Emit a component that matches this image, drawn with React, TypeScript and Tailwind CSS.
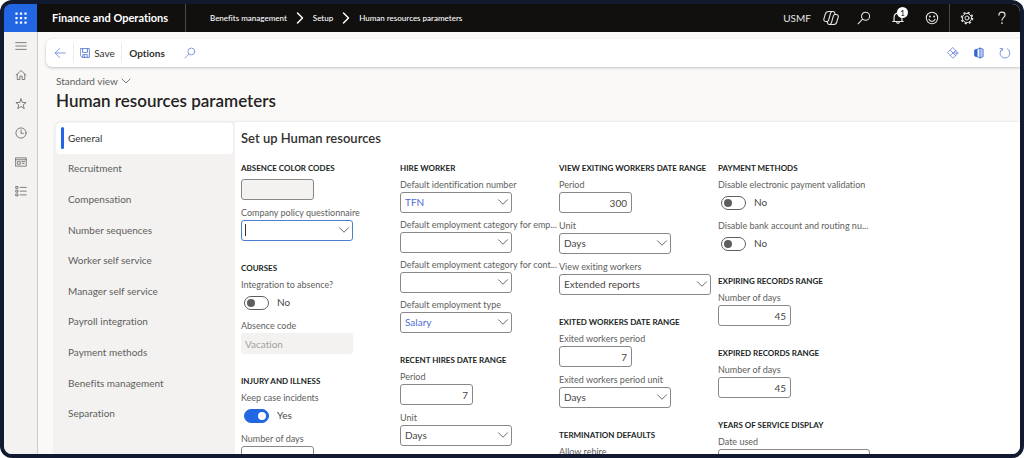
import type { ReactNode } from 'react'
import { ChevronDown, ChevronRight } from 'lucide-react'

const navItems = [
  'General',
  'Recruitment',
  'Compensation',
  'Number sequences',
  'Worker self service',
  'Manager self service',
  'Payroll integration',
  'Payment methods',
  'Benefits management',
  'Separation',
]

function Icon({ children, className = '' }: { children: ReactNode; className?: string }) {
  return (
    <svg
      viewBox="0 0 16 16"
      fill="none"
      stroke="currentColor"
      strokeLinecap="round"
      strokeLinejoin="round"
      className={`shrink-0 ${className}`}
      aria-hidden="true"
    >
      {children}
    </svg>
  )
}

function WaffleIcon() {
  return (
    <Icon className="size-3">
      <g fill="currentColor" stroke="none">
        {[0.5, 6.5, 12.5].map((y) =>
          [0.5, 6.5, 12.5].map((x) => <rect key={`${x}-${y}`} x={x} y={y} width="3" height="3" rx="0.6" />),
        )}
      </g>
    </Icon>
  )
}

function SearchIcon({ className }: { className: string }) {
  return (
    <Icon className={className}>
      <circle cx="9.8" cy="6" r="4.6" strokeWidth="1.2" />
      <path d="M6.4 9.4 1.2 14.6" strokeWidth="1.2" />
    </Icon>
  )
}

function CopilotIcon() {
  return (
    <Icon className="size-4">
      <path d="M5.8 1.5h4.2c.9 0 1.500.5 1.700 1.300l.4 1.700h1.100c1.500 0 2.400 1.200 2 2.600l-1.300 4.600c-.4 1.700-1.400 2.800-2.900 2.800H6.300c-.9 0-1.500-.5-1.700-1.300l-.4-1.700H2.900c-1.500 0-2.400-1.200-2-2.600l1.300-4.600C2.700 2.600 3.900 1.500 5.800 1.500z" strokeWidth="1.1" />
      <path d="M9.300 1.500c-1 .2-1.500.9-1.800 1.900L5.700 9.800c-.3 1-.7 1.600-1.500 1.700M6.700 14.500c1-.2 1.500-.9 1.800-1.900l1.800-6.400c.3-1 .7-1.600 1.800-1.700" strokeWidth="1.1" />
    </Icon>
  )
}

function BellIcon() {
  return (
    <Icon className="size-3.5">
      <path d="M2 12h12M3.500 12V7c0-2.600 2-4.500 4.500-4.500s4.500 1.900 4.500 4.500v5M6.300 12.300c.2 1.200.8 1.800 1.700 1.800s1.500-.6 1.700-1.800" strokeWidth="1.400" />
    </Icon>
  )
}

function SmileIcon() {
  return (
    <Icon className="size-3.5">
      <circle cx="8" cy="8" r="6.500" strokeWidth="1.200" />
      <path d="M4.500 9.500c.7 1.600 2 2.400 3.500 2.400s2.800-.8 3.500-2.400" strokeWidth="1.200" />
      <circle cx="5.600" cy="6.200" r="1.100" fill="currentColor" stroke="none" />
      <circle cx="10.400" cy="6.200" r="1.100" fill="currentColor" stroke="none" />
    </Icon>
  )
}

function GearIcon() {
  return (
    <Icon className="size-3.5">
      <circle cx="8" cy="8" r="5.200" strokeWidth="1.100" />
      <circle cx="8" cy="8" r="2.300" strokeWidth="1.100" />
      <circle cx="8" cy="8" r="6.300" strokeWidth="1.800" strokeDasharray="2.470 2.470" strokeLinecap="butt" />
    </Icon>
  )
}

function HelpIcon() {
  return (
    <Icon className="size-3.5">
      <path d="M4.500 4.800C4.500 2.700 6 1.300 8 1.300s3.500 1.300 3.500 3.200c0 2.600-3.500 3-3.500 6" strokeWidth="1.300" />
      <circle cx="8" cy="13.800" r="1" fill="currentColor" stroke="none" />
    </Icon>
  )
}

function HeaderButton({ label, className = 'w-[34px]', children }: { label: string; className?: string; children: ReactNode }) {
  return (
    <button type="button" aria-label={label} className={`flex h-full items-center justify-center ${className}`}>
      {children}
    </button>
  )
}

function Header() {
  return (
    <header className="flex h-7 shrink-0 items-center bg-[#11100f] text-white">
      <button type="button" aria-label="App launcher" className="flex h-full w-[33px] items-center justify-center bg-[#2266e3]">
        <WaffleIcon />
      </button>
      <div className="flex h-full w-[149px] items-center border-r border-[#4a4948] pl-[15px] text-[11px] font-bold whitespace-nowrap">
        Finance and Operations
      </div>
      <nav aria-label="Breadcrumb" className="flex items-center gap-[3px] pl-6 text-[8px] font-medium whitespace-nowrap">
        <a href="#benefits">Benefits management</a>
        <ChevronRight className="size-5" strokeWidth={1.75} />
        <a href="#setup">Setup</a>
        <ChevronRight className="size-5" strokeWidth={1.75} />
        <a href="#parameters">Human resources parameters</a>
      </nav>
      <div className="ml-auto flex h-full items-center text-[#e6e6e6]">
        <button type="button" className="pr-3 text-[10px]">USMF</button>
        <HeaderButton label="Copilot" className="w-4">
          <CopilotIcon />
        </HeaderButton>
        <HeaderButton label="Search" className="ml-2 w-[34px]">
          <SearchIcon className="size-3.5" />
        </HeaderButton>
        <HeaderButton label="Notifications">
          <span className="relative">
            <BellIcon />
            <span className="absolute -top-1 left-1.5 flex size-[11px] items-center justify-center rounded-full bg-white text-[8px] text-black">
              1
            </span>
          </span>
        </HeaderButton>
        <HeaderButton label="Feedback">
          <SmileIcon />
        </HeaderButton>
        <HeaderButton label="Settings" className="w-[35px] border-l border-[#4a4948]">
          <GearIcon />
        </HeaderButton>
        <HeaderButton label="Help" className="w-9">
          <HelpIcon />
        </HeaderButton>
      </div>
    </header>
  )
}

function SideRail() {
  const items = [
    {
      label: 'Menu',
      icon: <path d="M1 3.500h14M1 8h14M1 12.500h14" />,
    },
    {
      label: 'Home',
      icon: <path d="M1.500 8.200 8 2l6.500 6.200M3 7v7h3.500V9.500h3V14H13V7" />,
    },
    {
      label: 'Favorites',
      icon: <path d="m8 1.200 1.800 4.700 5 .2-3.900 3.100 1.400 4.900L8 11.300l-4.300 2.800 1.400-4.900L1.200 6.100l5-.2z" />,
    },
    {
      label: 'Recent',
      icon: (
        <>
          <circle cx="8" cy="8" r="6.800" />
          <path d="M8 4v4.500h3" />
        </>
      ),
    },
    {
      label: 'Workspaces',
      icon: <path d="M1 2.500h14v11H1zM1 5h14M3.500 7.500h3.500v3.500H3.500zM9 7.500h4M10 10h2" />,
    },
    {
      label: 'Modules',
      icon: <path d="M1.500 2h2.500v2.500H1.500zM1.500 7h2.500v2.500H1.500zM1.500 12h2.500v2.500H1.500zM7 3.200h8M7 8.200h8M7 13.200h8" />,
    },
  ]

  return (
    <nav aria-label="Main" className="w-[34px] shrink-0 border-r border-[#cfcdcb] bg-[#f3f2f1] text-[#5c5a58]">
      <ul className="grid h-[173px] auto-rows-fr">
        {items.map((item) => (
          <li key={item.label} className="flex">
            <button type="button" aria-label={item.label} className="flex flex-1 items-center justify-center">
              <Icon className="size-3">{item.icon}</Icon>
            </button>
          </li>
        ))}
      </ul>
    </nav>
  )
}

function Toolbar() {
  return (
    <div className="mt-[7px] ml-2 flex h-7 shrink-0 items-center rounded-l-md bg-white pr-0.5 text-[10px] text-[#323130] shadow-[0_1px_3px_rgba(0,0,0,0.22)]">
      <button type="button" aria-label="Back" className="flex h-5 w-7 items-center justify-center border-r border-[#edebe9] text-[#7b93dc]">
        <Icon className="size-3">
          <path d="M15 8H1.500M7.500 2 1.500 8l6 6" strokeWidth="1.300" />
        </Icon>
      </button>
      <button type="button" className="flex h-5 w-12 items-center justify-center gap-1 border-r border-[#edebe9]">
        <Icon className="size-2.5 text-[#5f7fd9]">
          <path d="M1 1h14v14H3.500L1 12.500zM4 1v6h8V1M4.500 15v-4.500h7V15M7 12.500V15" strokeWidth="1.500" />
        </Icon>
        Save
      </button>
      <button type="button" className="w-[50px] text-center font-bold">Options</button>
      <button type="button" aria-label="Search actions" className="flex h-5 w-9 items-center justify-center text-[#7b93dc]">
        <SearchIcon className="size-3" />
      </button>
      <div className="ml-auto flex items-center text-[#6f8bdd]">
        <button type="button" aria-label="Power Apps" className="flex w-[26px] justify-center">
          <Icon className="size-3">
            <path d="M8 1 15 8 8 15 1 8z" strokeWidth="1.200" />
            <path d="M4.500 4.500 8 8l-3.500 3.500M11.500 4.500 8 8l3.500 3.500M11.500 6.500 13 8l-1.500 1.500L10 8z" strokeWidth="1.200" />
          </Icon>
        </button>
        <button type="button" aria-label="Open in Microsoft Office" className="flex w-[26px] justify-center">
          <Icon className="size-3 text-[#3267d0]">
            <path d="M9.500 1.500 3 4v8l6.500 2.500z" fill="#ffffff" />
            <path d="M9.500 1.500 13.500 3v10l-4 1.500z" fill="#b9c9f5" />
            <path d="M2.500 4 5.500 3v10l-3-1z" fill="currentColor" />
          </Icon>
        </button>
        <button type="button" aria-label="Refresh" className="flex w-[26px] justify-center">
          <Icon className="size-3">
            <path d="M11.200 2.300a6.600 6.600 0 1 1-6.900.3M1.500 1.800l3.200.4-.6 3.200" strokeWidth="1.200" />
          </Icon>
        </button>
      </div>
    </div>
  )
}

function Group({ title, gap = 'gap-[7px]', children }: { title: string; gap?: string; children: ReactNode }) {
  return (
    <section>
      <h3 className="mb-1 h-3.5 text-[8px] leading-[14px] font-bold whitespace-nowrap text-[#201f1e]">{title}</h3>
      <div className={`flex flex-col ${gap}`}>{children}</div>
    </section>
  )
}

function Label({ id, children }: { id: string; children: ReactNode }) {
  return (
    <label htmlFor={id} className="block h-[13px] text-[9px] leading-3 whitespace-nowrap text-[#605e5c]">
      {children}
    </label>
  )
}

function NumberField({ id, label, value }: { id: string; label: string; value: string }) {
  return (
    <div>
      <Label id={id}>{label}</Label>
      <input
        id={id}
        defaultValue={value}
        className="block h-[21px] w-[73px] rounded-[3px] border border-[#8a8886] bg-white px-1 text-right text-[10px] text-[#484644]"
      />
    </div>
  )
}

type SelectFieldProps = {
  id: string
  label: string
  value?: string
  wide?: boolean
  lookup?: boolean
  focused?: boolean
}

function SelectField({ id, label, value = '', wide, lookup, focused }: SelectFieldProps) {
  return (
    <div>
      <Label id={id}>{label}</Label>
      <div className={`relative ${wide ? 'w-[152px]' : 'w-28'}`}>
        <select
          id={id}
          defaultValue={value}
          className={`block h-[21px] w-full appearance-none rounded-[3px] border bg-white pl-1 text-[10px] ${
            focused ? 'border-[#4a7fd0]' : 'border-[#8a8886]'
          } ${lookup ? 'text-[#4f6bd8]' : 'text-[#484644]'}`}
        >
          <option>{value}</option>
        </select>
        {focused && <span className="absolute top-1 left-1 h-3 w-px bg-[#323130]" />}
        <ChevronDown className="pointer-events-none absolute top-px right-0 size-[18px] text-[#605e5c]" strokeWidth={1.25} />
      </div>
    </div>
  )
}

function ToggleField({ id, label, on = false }: { id: string; label: string; on?: boolean }) {
  return (
    <div>
      <Label id={id}>{label}</Label>
      <div className="flex h-[21px] items-center gap-2 pl-[3px] text-[10px] text-[#484644]">
        <input
          id={id}
          type="checkbox"
          role="switch"
          defaultChecked={on}
          className="h-3.5 w-[25px] appearance-none rounded-full border border-[#605e5c] bg-white p-0.5 before:block before:size-2 before:rounded-full before:bg-[#605e5c] checked:border-[#2266e3] checked:bg-[#2266e3] checked:before:ml-[11px] checked:before:bg-white"
        />
        {on ? 'Yes' : 'No'}
      </div>
    </div>
  )
}

function ParametersForm() {
  return (
    <form className="min-w-0 flex-1 overflow-hidden bg-white pl-1.5">
      <h2 className="pt-1.5 pb-[13px] text-[13px] leading-5 font-semibold text-[#323130]">Set up Human resources</h2>
      <div className="grid grid-cols-[repeat(4,151px)] gap-2">
        <div className="flex flex-col gap-5">
          <Group title="ABSENCE COLOR CODES">
            <input
              aria-label="Absence color"
              disabled
              className="block h-[21px] w-[73px] rounded-[3px] border border-[#8a8886] bg-[#f3f2f1]"
            />
            <SelectField id="questionnaire" label="Company policy questionnaire" focused />
          </Group>
          <Group title="COURSES">
            <ToggleField id="integration" label="Integration to absence?" />
            <div>
              <Label id="absence-code">Absence code</Label>
              <input
                id="absence-code"
                disabled
                defaultValue="Vacation"
                className="block h-[21px] w-28 rounded-[3px] bg-[#f3f2f1] px-1 text-[10px] text-[#a19f9d]"
              />
            </div>
          </Group>
          <Group title="INJURY AND ILLNESS">
            <ToggleField id="case-incidents" label="Keep case incidents" on />
            <NumberField id="injury-days" label="Number of days" value="5" />
          </Group>
        </div>

        <div className="flex flex-col gap-5">
          <Group title="HIRE WORKER" gap="gap-1.5">
            <SelectField id="identification" label="Default identification number" value="TFN" lookup />
            <SelectField id="category-employees" label="Default employment category for emp..." />
            <SelectField id="category-contractors" label="Default employment category for cont..." />
            <SelectField id="employment-type" label="Default employment type" value="Salary" lookup />
          </Group>
          <Group title="RECENT HIRES DATE RANGE">
            <NumberField id="hires-period" label="Period" value="7" />
            <SelectField id="hires-unit" label="Unit" value="Days" />
          </Group>
        </div>

        <div className="flex flex-col gap-5">
          <Group title="VIEW EXITING WORKERS DATE RANGE">
            <NumberField id="exiting-period" label="Period" value="300" />
            <SelectField id="exiting-unit" label="Unit" value="Days" />
            <SelectField id="exiting-view" label="View exiting workers" value="Extended reports" wide />
          </Group>
          <Group title="EXITED WORKERS DATE RANGE">
            <NumberField id="exited-period" label="Exited workers period" value="7" />
            <SelectField id="exited-unit" label="Exited workers period unit" value="Days" />
          </Group>
          <Group title="TERMINATION DEFAULTS">
            <ToggleField id="allow-rehire" label="Allow rehire" />
          </Group>
        </div>

        <div className="flex flex-col gap-5">
          <Group title="PAYMENT METHODS">
            <ToggleField id="electronic-payment" label="Disable electronic payment validation" />
            <ToggleField id="bank-account" label="Disable bank account and routing nu..." />
          </Group>
          <Group title="EXPIRING RECORDS RANGE">
            <NumberField id="expiring-days" label="Number of days" value="45" />
          </Group>
          <Group title="EXPIRED RECORDS RANGE">
            <NumberField id="expired-days" label="Number of days" value="45" />
          </Group>
          <Group title="YEARS OF SERVICE DISPLAY">
            <SelectField id="date-used" label="Date used" wide />
          </Group>
        </div>
      </div>
    </form>
  )
}

export default function App() {
  return (
    <div className="bg-white font-[Lato,'Open_Sans',sans-serif] [font-variant-ligatures:none]">
      <div className="flex h-screen flex-col rounded-xl bg-[#111a2e] p-1">
        <div className="flex min-h-0 flex-1 flex-col overflow-hidden rounded-lg bg-[#faf9f8]">
          <Header />
          <div className="flex min-h-0 flex-1">
            <SideRail />
            <main className="flex min-w-0 flex-1 flex-col">
              <Toolbar />
              <div className="flex min-h-0 flex-1 flex-col pt-1.5 pl-[17px]">
                <button type="button" className="ml-px flex h-4 items-center self-start text-[10px] text-[#605e5c]">
                  Standard view
                  <ChevronDown className="size-4" strokeWidth={1.25} />
                </button>
                <h1 className="ml-px text-[17px] leading-6 font-semibold text-[#242322]">Human resources parameters</h1>
                <div className="mt-[9px] flex min-h-0 flex-1 overflow-hidden rounded-tl-md shadow-[0_0_3px_rgba(0,0,0,0.12)]">
                  <nav aria-label="Parameter areas" className="w-[180px] shrink-0 bg-[#f3f2f1] pt-px pr-0.5 pl-px">
                    <ul className="grid h-[306px] auto-rows-fr">
                      {navItems.map((item) => (
                        <li key={item}>
                          {item === 'General' ? (
                            <a
                              href="#general"
                              aria-current="page"
                              className="flex h-full items-center gap-1 rounded bg-white pl-[5px] text-[10px] text-[#323130]"
                            >
                              <span className="h-[22px] w-[3px] rounded-full bg-[#2266e3]" />
                              {item}
                            </a>
                          ) : (
                            <a href="#area" className="flex h-full items-center pl-3 text-[10px] text-[#605e5c]">
                              {item}
                            </a>
                          )}
                        </li>
                      ))}
                    </ul>
                  </nav>
                  <ParametersForm />
                </div>
              </div>
            </main>
          </div>
        </div>
      </div>
    </div>
  )
}
